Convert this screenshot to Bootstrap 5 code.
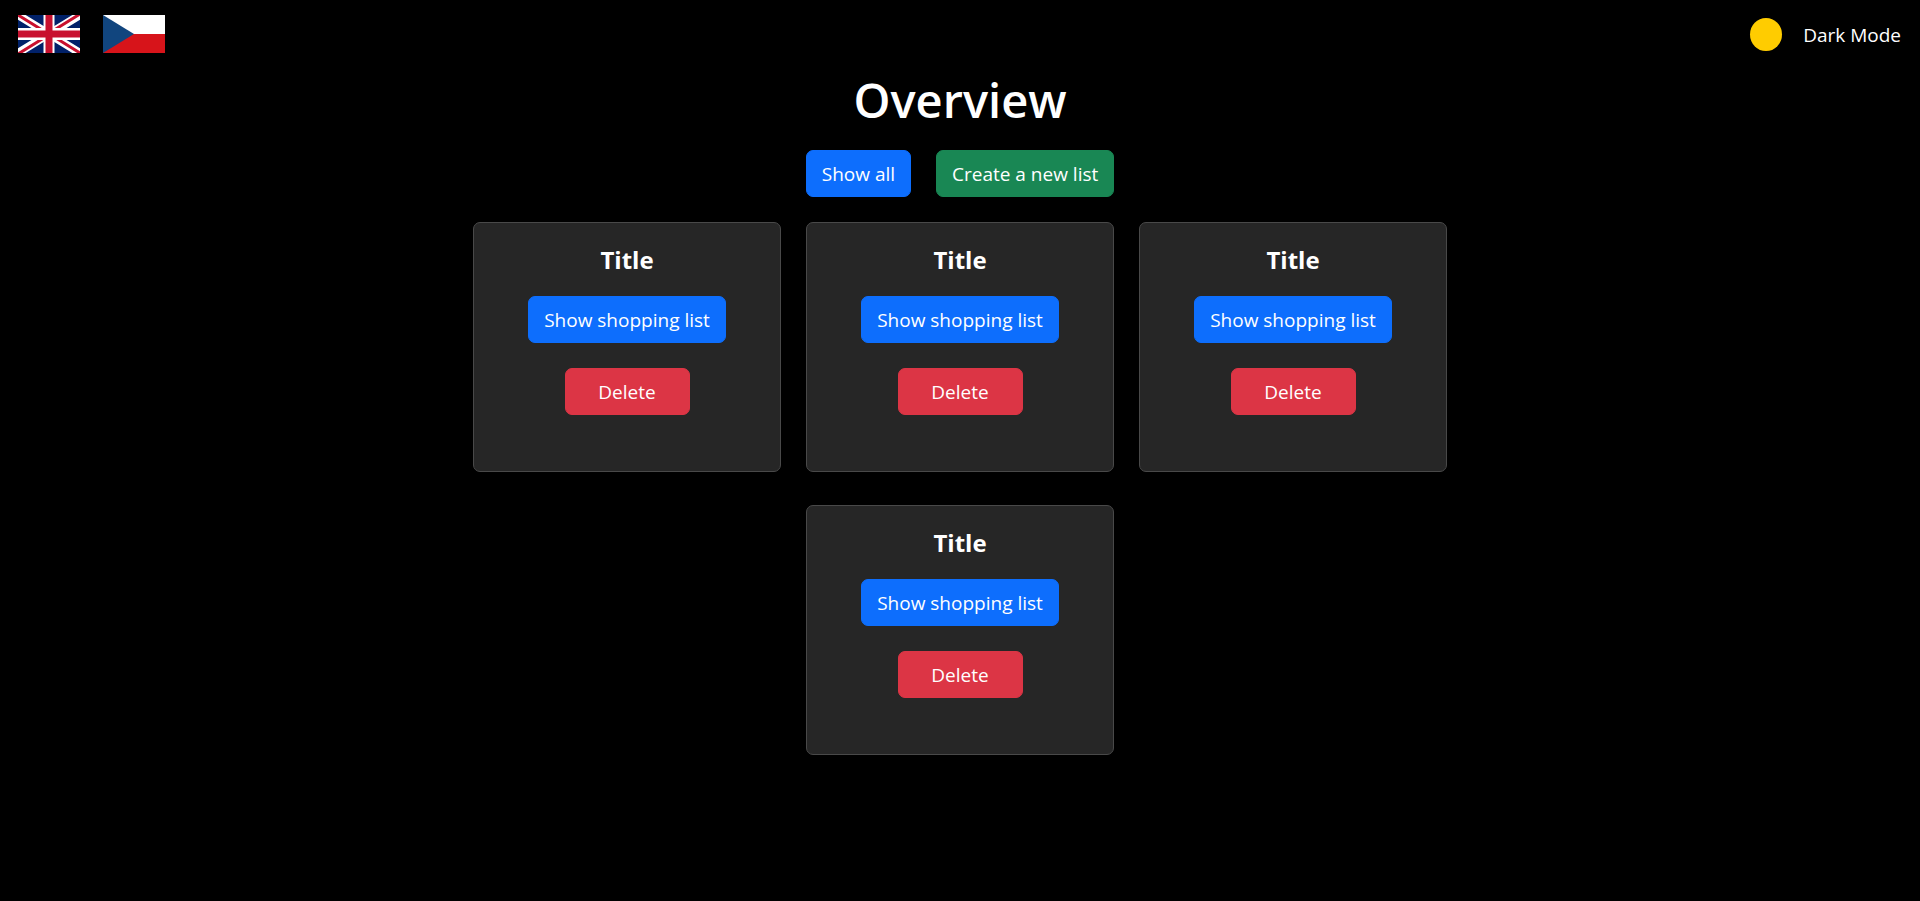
<!DOCTYPE html>
<html lang="en" data-bs-theme="dark">
<head>
<meta charset="utf-8">
<meta name="viewport" content="width=device-width, initial-scale=1">
<title>Overview</title>
<link href="https://cdn.jsdelivr.net/npm/bootstrap@5.3.0/dist/css/bootstrap.min.css" rel="stylesheet">
<style>
  body { background: #000; color: #fff; font-family: "Open Sans", "Noto Sans", sans-serif; font-size: 19px; line-height: 30px; }
  .topbar { padding: 15px 18px 0; }
  .flags { gap: 23px; }
  .flag-btn svg { display: block; width: 62px; height: 38px; }
  .mode-btn { gap: 21px; }
  .mode-label { padding-top: 2px; padding-right: 1px; }
  .sun { width: 32px; height: 33px; border-radius: 50%; background: #fc0; }
  .page-title { font-size: 47px; line-height: 60px; font-weight: 600; margin: 17px 0 20px; }
  .btn { --bs-btn-font-size: 19px; --bs-btn-line-height: 31px; --bs-btn-padding-x: 15px; --bs-btn-border-radius: 7px; padding-top: 8px; padding-bottom: 6px; white-space: nowrap; }
  .actions { gap: 25px; margin-bottom: 25px; }
  .list-grid { gap: 33px 25px; max-width: 1000px; }
  .list-card { --bs-card-bg: #262626; --bs-card-border-color: #494949; --bs-card-border-radius: 7px; width: 308px; min-height: 250px; color: #fff; }
  .list-card .card-body { padding: 19px; gap: 25px; }
  .list-title { font-size: 24px; line-height: 36px; font-weight: 700; margin: 0 0 -7px; }
  .delete-btn { width: 125px; }
</style>
</head>
<body>
<header class="topbar d-flex justify-content-between align-items-center">
  <div class="flags d-flex">
    <button type="button" class="flag-btn border-0 p-0 bg-transparent" aria-label="English">
      <svg viewBox="0 0 62 38" preserveAspectRatio="none" aria-hidden="true">
        <rect width="62" height="38" fill="#012169"/>
        <path d="M0 0 62 38M62 0 0 38" stroke="#fff" stroke-width="8"/>
        <path d="M0 0 29 18M33 17 62 -1M62 38 33 20M29 21 0 39" stroke="#c8102e" stroke-width="3"/>
        <path d="M31 0V38" stroke="#fff" stroke-width="11"/>
        <path d="M0 19H62" stroke="#fff" stroke-width="12"/>
        <path d="M31 0V38M0 19H62" stroke="#c8102e" stroke-width="7"/>
      </svg>
    </button>
    <button type="button" class="flag-btn border-0 p-0 bg-transparent" aria-label="Čeština">
      <svg viewBox="0 0 62 38" preserveAspectRatio="none" aria-hidden="true">
        <rect width="62" height="38" fill="#fff"/>
        <rect y="19" width="62" height="19" fill="#d7141a"/>
        <path d="M0 0 31 19 0 38Z" fill="#11457e"/>
      </svg>
    </button>
  </div>
  <button type="button" class="mode-btn d-flex align-items-center border-0 p-0 bg-transparent text-white"><span class="sun"></span><span class="mode-label">Dark Mode</span></button>
</header>
<main class="text-center">
  <h1 class="page-title">Overview</h1>
  <div class="actions d-flex flex-wrap justify-content-center">
    <button type="button" class="btn btn-primary">Show all</button>
    <button type="button" class="btn btn-success">Create a new list</button>
  </div>
  <div class="list-grid d-flex flex-wrap justify-content-center mx-auto">
    <section class="card list-card"><div class="card-body d-flex flex-column align-items-center">
      <h2 class="list-title">Title</h2>
      <button type="button" class="btn btn-primary">Show shopping list</button>
      <button type="button" class="btn btn-danger delete-btn">Delete</button>
    </div></section>
    <section class="card list-card"><div class="card-body d-flex flex-column align-items-center">
      <h2 class="list-title">Title</h2>
      <button type="button" class="btn btn-primary">Show shopping list</button>
      <button type="button" class="btn btn-danger delete-btn">Delete</button>
    </div></section>
    <section class="card list-card"><div class="card-body d-flex flex-column align-items-center">
      <h2 class="list-title">Title</h2>
      <button type="button" class="btn btn-primary">Show shopping list</button>
      <button type="button" class="btn btn-danger delete-btn">Delete</button>
    </div></section>
    <section class="card list-card"><div class="card-body d-flex flex-column align-items-center">
      <h2 class="list-title">Title</h2>
      <button type="button" class="btn btn-primary">Show shopping list</button>
      <button type="button" class="btn btn-danger delete-btn">Delete</button>
    </div></section>
  </div>
</main>
<script src="https://cdn.jsdelivr.net/npm/bootstrap@5.3.0/dist/js/bootstrap.bundle.min.js"></script>
</body>
</html>
